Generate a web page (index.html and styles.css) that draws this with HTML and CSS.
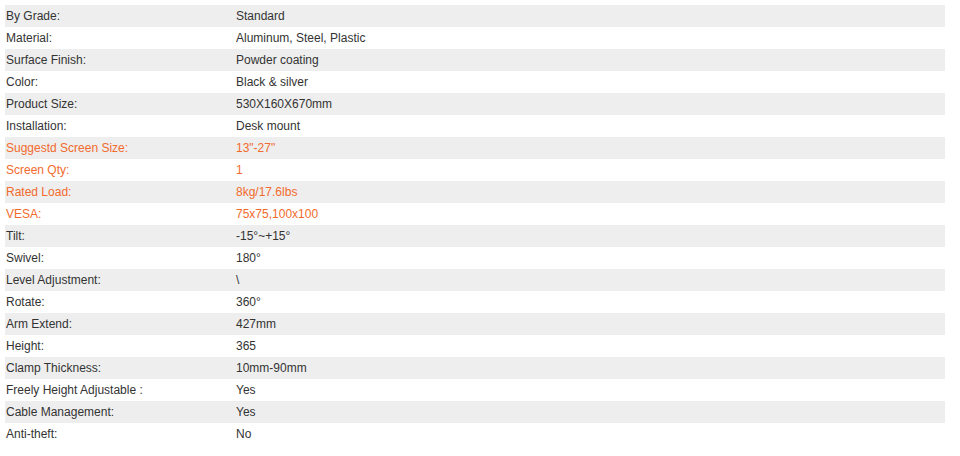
FILE: index.html
```html
<!DOCTYPE html>
<html>
<head>
<meta charset="utf-8">
<link rel="stylesheet" href="styles.css">
</head>
<body>
<table class="specs">
<tr><td class="k">By Grade:</td><td>Standard</td></tr>
<tr><td class="k">Material:</td><td>Aluminum, Steel, Plastic</td></tr>
<tr><td class="k">Surface Finish:</td><td>Powder coating</td></tr>
<tr><td class="k">Color:</td><td>Black &amp; silver</td></tr>
<tr><td class="k">Product Size:</td><td>530X160X670mm</td></tr>
<tr><td class="k">Installation:</td><td>Desk mount</td></tr>
<tr class="hl"><td class="k">Suggestd Screen Size:</td><td>13"-27"</td></tr>
<tr class="hl"><td class="k">Screen Qty:</td><td>1</td></tr>
<tr class="hl"><td class="k">Rated Load:</td><td>8kg/17.6lbs</td></tr>
<tr class="hl"><td class="k">VESA:</td><td>75x75,100x100</td></tr>
<tr><td class="k">Tilt:</td><td>-15°~+15°</td></tr>
<tr><td class="k">Swivel:</td><td>180°</td></tr>
<tr><td class="k">Level Adjustment:</td><td>\</td></tr>
<tr><td class="k">Rotate:</td><td>360°</td></tr>
<tr><td class="k">Arm Extend:</td><td>427mm</td></tr>
<tr><td class="k">Height:</td><td>365</td></tr>
<tr><td class="k">Clamp Thickness:</td><td>10mm-90mm</td></tr>
<tr><td class="k">Freely Height Adjustable :</td><td>Yes</td></tr>
<tr><td class="k">Cable Management:</td><td>Yes</td></tr>
<tr><td class="k">Anti-theft:</td><td>No</td></tr>
</table>
</body>
</html>
```
FILE: styles.css
```css
html, body {
  margin: 0;
  background: #fff;
}
body {
  padding: 5px 0 0 5px;
  font-family: "Liberation Sans", Arial, sans-serif;
  font-size: 12px;
  color: #333;
}
.specs {
  border-collapse: collapse;
  width: 940px;
}
.specs td {
  height: 22px;
  padding: 0 0 0 1px;
  line-height: 22px;
  vertical-align: middle;
}
.specs td.k {
  width: 229px;
}
.specs tr:nth-child(odd) {
  background: #eeeeee;
}
.specs tr.hl {
  color: #f26a2c;
}
```
